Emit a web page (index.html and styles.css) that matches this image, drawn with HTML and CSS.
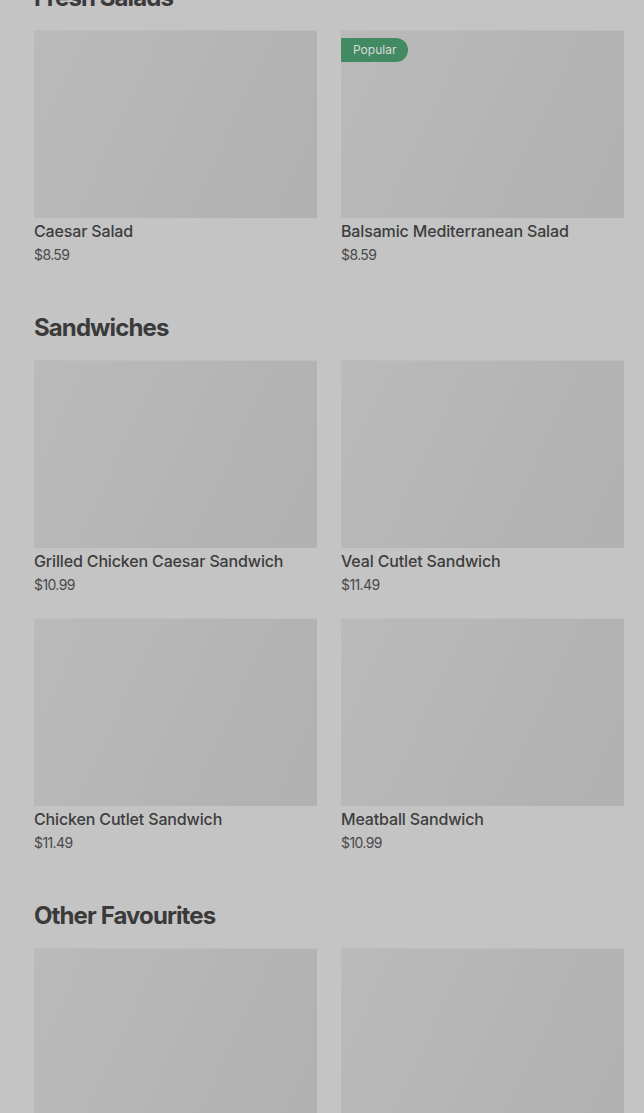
FILE: index.html
```html
<!DOCTYPE html>
<html lang="en">
<head>
    <meta charset="UTF-8">
    <meta name="viewport" content="width=device-width, initial-scale=1.0">
    <title>Menu</title>
    <link rel="stylesheet" href="styles.css">
</head>
<body>
    <div class="menu">
        <section class="section">
            <h2>Fresh Salads</h2>
            <div class="grid">
                <div class="item">
                    <div class="thumb"></div>
                    <div class="name">Caesar Salad</div>
                    <div class="price">$8.59</div>
                </div>
                <div class="item">
                    <div class="thumb"><span class="badge">Popular</span></div>
                    <div class="name">Balsamic Mediterranean Salad</div>
                    <div class="price">$8.59</div>
                </div>
            </div>
        </section>

        <section class="section">
            <h2>Sandwiches</h2>
            <div class="grid">
                <div class="item">
                    <div class="thumb"></div>
                    <div class="name">Grilled Chicken Caesar Sandwich</div>
                    <div class="price">$10.99</div>
                </div>
                <div class="item">
                    <div class="thumb"></div>
                    <div class="name">Veal Cutlet Sandwich</div>
                    <div class="price">$11.49</div>
                </div>
                <div class="item">
                    <div class="thumb"></div>
                    <div class="name">Chicken Cutlet Sandwich</div>
                    <div class="price">$11.49</div>
                </div>
                <div class="item">
                    <div class="thumb"></div>
                    <div class="name">Meatball Sandwich</div>
                    <div class="price">$10.99</div>
                </div>
            </div>
        </section>

        <section class="section">
            <h2>Other Favourites</h2>
            <div class="grid">
                <div class="item">
                    <div class="thumb"></div>
                </div>
                <div class="item">
                    <div class="thumb"></div>
                </div>
            </div>
        </section>
    </div>
</body>
</html>
```

FILE: styles.css
```css
body {
    margin: 0;
    background-color: #c4c4c4;
    font-family: Inter, "Noto Sans", sans-serif;
    color: #3d3d3d;
    overflow: hidden;
}
.menu {
    margin-top: -18px;
    padding: 0 20px 0 34px;
}
.section {
    margin-bottom: 47px;
}
h2 {
    margin: 0 0 16px 0;
    font-size: 24px;
    line-height: 32px;
    font-weight: 700;
    letter-spacing: -0.9px;
    color: #3a3a3a;
}
.grid {
    display: grid;
    grid-template-columns: 1fr 1fr;
    column-gap: 24px;
    row-gap: 23px;
}
.thumb {
    position: relative;
    height: 188px;
    background: linear-gradient(115deg, #bababa 0%, #b7b7b7 35%, #b3b3b3 70%, #b1b1b1 100%);
    border-top: 1px solid #bdbdbd;
    box-sizing: border-box;
}
.badge {
    position: absolute;
    top: 7px;
    left: 0;
    height: 24px;
    line-height: 24px;
    padding: 0 12px;
    background-color: #428a62;
    color: #dcdcdc;
    font-size: 12px;
    border-radius: 0 12px 12px 0;
}
.name {
    margin-top: 3px;
    font-size: 16px;
    line-height: 20px;
    font-weight: 500;
    letter-spacing: -0.15px;
    color: #3d3d3d;
}
.price {
    margin-top: 4px;
    font-size: 14px;
    line-height: 20px;
    color: #4a4a4a;
    letter-spacing: -0.6px;
}
```
